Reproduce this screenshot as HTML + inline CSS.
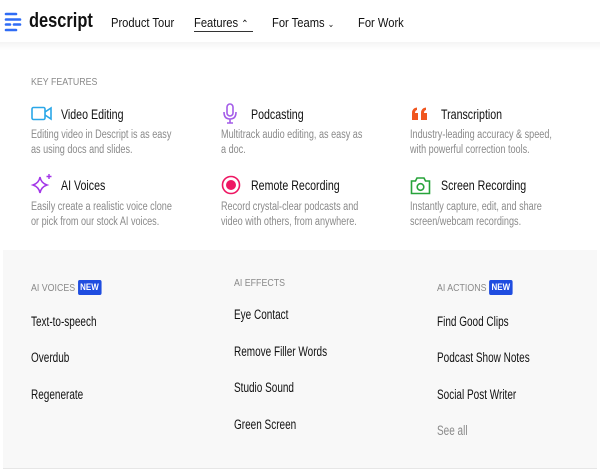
<!DOCTYPE html>
<html><head><style>
*{margin:0;padding:0;box-sizing:border-box}
body{width:600px;height:472px;background:#fff;font-family:"Liberation Sans",sans-serif;position:relative;overflow:hidden;color:#111}
.a{position:absolute;white-space:nowrap;transform-origin:left top}
.nav{font-size:13px;color:#111;top:15px;transform:scaleX(.86)}
.lbl{font-size:10.5px;color:#8a8a8a;transform:scaleX(.84)}
.t{font-size:14px;color:#111;transform:scaleX(.76);top:0}
.d{font-size:11.5px;color:#8a8a8a;line-height:15px;transform:scaleX(.79)}
.it{font-size:13.5px;color:#111;transform:scaleX(.74)}
.new{display:inline-block;background:#1f4de0;color:#fff;font-size:9.5px;font-weight:bold;padding:2px 3px;border-radius:2px;margin-left:3px;vertical-align:1px}
</style></head><body>
<svg class="a" style="left:4px;top:12px" width="20" height="20" viewBox="0 0 20 20">
<g stroke="#2f6cf5" stroke-width="2.6" stroke-linecap="round">
<line x1="2" y1="2" x2="12" y2="2"/><line x1="2" y1="7.5" x2="16" y2="7.5"/><line x1="2" y1="12.5" x2="6" y2="12.5"/><line x1="10" y1="12.5" x2="16" y2="12.5"/><line x1="2" y1="18" x2="12" y2="18"/></g></svg>
<div class="a" style="left:29px;top:10px;font-size:20px;font-weight:bold;color:#111;transform:scaleX(.82)">descript</div>
<div class="a nav" style="left:111px">Product Tour</div>
<div class="a nav" style="left:194px">Features <span style="font-size:10px">&#8963;</span></div>
<div class="a" style="left:194px;top:31px;width:59px;height:1px;background:#333"></div>
<div class="a nav" style="left:272px">For Teams <span style="font-size:9px">&#8964;</span></div>
<div class="a nav" style="left:358px">For Work</div>
<div class="a" style="left:0;top:42px;width:600px;height:8px;background:linear-gradient(#f4f4f4,#fff)"></div>

<div class="a lbl" style="left:31px;top:76px">KEY FEATURES</div>
<svg class="a" style="left:31px;top:106px" width="22" height="15" viewBox="0 0 22 15"><rect x="1" y="1.5" width="13" height="12" rx="1.5" fill="none" stroke="#2aa7e8" stroke-width="1.6"/><path d="M14 6 L20 2 V13 L14 9" fill="none" stroke="#2aa7e8" stroke-width="1.6"/></svg>
<div class="a t" style="left:61px;top:106px">Video Editing</div>
<div class="a d" style="left:31px;top:128px">Editing video in Descript is as easy<br>as using docs and slides.</div>
<svg class="a" style="left:222px;top:103px" width="16" height="22" viewBox="0 0 16 22"><rect x="5" y="1" width="6" height="12" rx="3" fill="none" stroke="#a35be8" stroke-width="1.6"/><path d="M2 9 Q2 16 8 16 Q14 16 14 9 M8 16 V20 M5 20 H11" fill="none" stroke="#a35be8" stroke-width="1.6"/></svg>
<div class="a t" style="left:251px;top:106px">Podcasting</div>
<div class="a d" style="left:221px;top:128px">Multitrack audio editing, as easy as<br>a doc.</div>
<svg class="a" style="left:411px;top:107px" width="17" height="14" viewBox="0 0 17 14"><path d="M1 13 V6 Q1 1 6 0.5 V3 Q4 3.5 4 6 H7 V13Z M10 13 V6 Q10 1 15 0.5 V3 Q13 3.5 13 6 H16 V13Z" fill="#f0561f"/></svg>
<div class="a t" style="left:441px;top:106px">Transcription</div>
<div class="a d" style="left:410px;top:128px">Industry-leading accuracy &amp; speed,<br>with powerful correction tools.</div>

<svg class="a" style="left:30px;top:173px" width="24" height="22" viewBox="0 0 24 22"><path d="M10 4 Q11 10 17 12 Q11 14 10 20 Q9 14 3 12 Q9 10 10 4Z" fill="none" stroke="#a335e8" stroke-width="1.5"/><path d="M19 1 V6 M16.5 3.5 H21.5" stroke="#a335e8" stroke-width="1.4"/></svg>
<div class="a t" style="left:61px;top:177px">AI Voices</div>
<div class="a d" style="left:31px;top:200px">Easily create a realistic voice clone<br>or pick from our stock AI voices.</div>
<svg class="a" style="left:221px;top:175px" width="20" height="20" viewBox="0 0 20 20"><circle cx="10" cy="10" r="8.5" fill="none" stroke="#ee1763" stroke-width="1.6"/><circle cx="10" cy="10" r="5" fill="#ee1763"/></svg>
<div class="a t" style="left:251px;top:177px">Remote Recording</div>
<div class="a d" style="left:221px;top:200px">Record crystal-clear podcasts and<br>video with others, from anywhere.</div>
<svg class="a" style="left:410px;top:176px" width="21" height="19" viewBox="0 0 21 19"><path d="M1.5 5 H5.5 L7 2 H14 L15.5 5 H19.5 V17.5 H1.5Z" fill="none" stroke="#27a33a" stroke-width="1.6"/><circle cx="10.5" cy="11" r="3.3" fill="none" stroke="#27a33a" stroke-width="1.6"/></svg>
<div class="a t" style="left:441px;top:177px">Screen Recording</div>
<div class="a d" style="left:410px;top:200px">Instantly capture, edit, and share<br>screen/webcam recordings.</div>

<div class="a" style="left:3px;top:250px;width:594px;height:219px;background:#f8f8f8;border-bottom:1px solid #e6e6e6"></div>
<div class="a lbl" style="left:31px;top:280px">AI VOICES<span class="new">NEW</span></div>
<div class="a it" style="left:31px;top:314px">Text-to-speech</div>
<div class="a it" style="left:31px;top:350px">Overdub</div>
<div class="a it" style="left:31px;top:387px">Regenerate</div>
<div class="a lbl" style="left:234px;top:277px">AI EFFECTS</div>
<div class="a it" style="left:234px;top:307px">Eye Contact</div>
<div class="a it" style="left:234px;top:344px">Remove Filler Words</div>
<div class="a it" style="left:234px;top:380px">Studio Sound</div>
<div class="a it" style="left:234px;top:417px">Green Screen</div>
<div class="a lbl" style="left:437px;top:280px">AI ACTIONS<span class="new">NEW</span></div>
<div class="a it" style="left:437px;top:314px">Find Good Clips</div>
<div class="a it" style="left:437px;top:350px">Podcast Show Notes</div>
<div class="a it" style="left:437px;top:387px">Social Post Writer</div>
<div class="a it" style="left:437px;top:423px;color:#8a8a8a">See all</div>
</body></html>
